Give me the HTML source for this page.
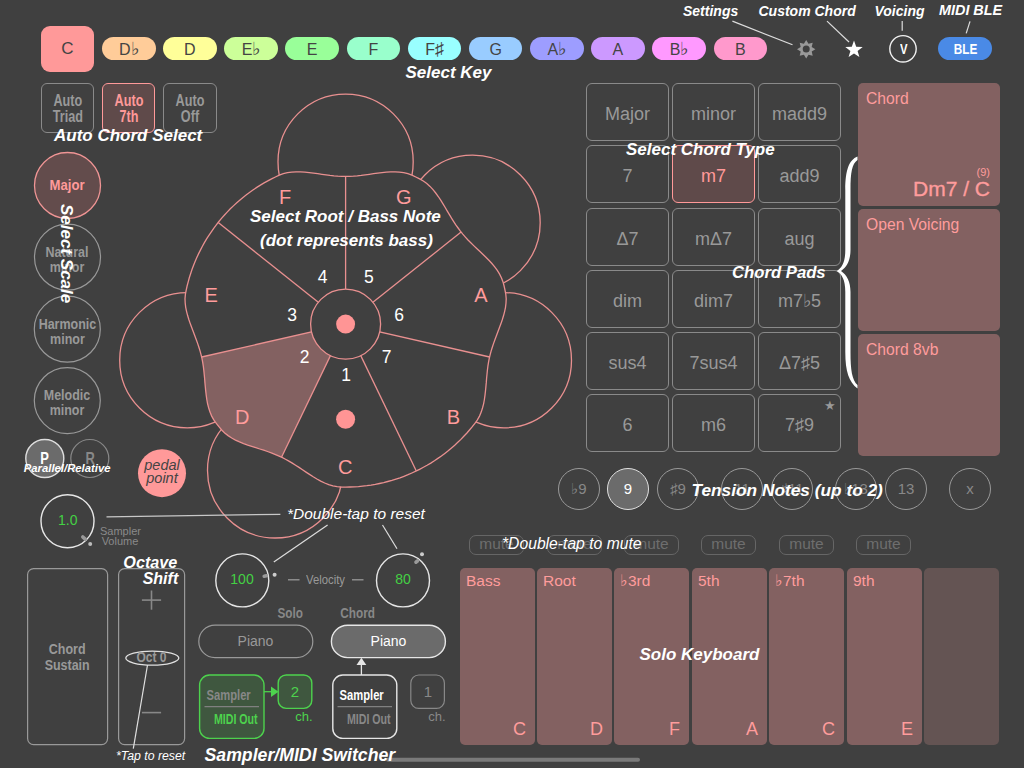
<!DOCTYPE html>
<html><head><meta charset="utf-8">
<style>
html,body{margin:0;padding:0;}
body{width:1024px;height:768px;background:#404040;position:relative;overflow:hidden;font-family:"Liberation Sans",sans-serif;}
.a{position:absolute;box-sizing:border-box;}
.key{position:absolute;top:37px;height:23.3px;width:53.5px;border-radius:12px;color:#444;font-size:16px;line-height:25px;text-align:center;}
.ann{position:absolute;color:#fff;font-family:"Liberation Sans",sans-serif;font-weight:bold;font-style:italic;white-space:nowrap;}
.cb{position:absolute;width:83px;height:58px;border:1.3px solid #8a8a8a;border-radius:6px;box-sizing:border-box;color:#999;font-size:18px;text-align:center;line-height:60px;}
.ct{text-align:center;}
.fl{font-size:1.12em;line-height:0;}
.cond{display:inline-block;transform:scaleX(0.82);font-weight:bold;}
.pad{position:absolute;left:858px;width:142px;background:#836161;border-radius:5px;color:#ff9c9c;font-size:15.7px;}
.pad span{position:absolute;left:8px;top:7px;}
.tn{position:absolute;top:468px;width:42px;height:42px;border-radius:50%;border:1.3px solid #999;box-sizing:border-box;color:#888;font-size:15px;text-align:center;line-height:40px;}
.mute{position:absolute;top:534.7px;width:55px;height:20px;border:1.3px solid #666;border-radius:7px;box-sizing:border-box;color:#6e6e6e;font-size:15.5px;text-align:center;line-height:16.5px;}
.sk{position:absolute;top:568px;height:177px;width:75px;background:#836161;border-radius:5px;color:#ff9c9c;font-size:15.5px;}
.sk .t{position:absolute;left:6px;top:4px;}
.sk .b{position:absolute;right:9px;bottom:5px;font-size:18px;}
</style></head>
<body>
<svg class="a" style="left:0;top:0" width="1024" height="768" viewBox="0 0 1024 768">
<defs><path id="wp" d="M345.6,176.4 L349.5,176.3 L353.4,176.1 L357.3,175.8 L361.2,175.4 L365.2,174.8 L369.3,174.3 L373.5,173.7 L377.7,173.1 L382.0,172.6 L386.3,172.1 L390.7,171.9 L395.1,171.9 L399.4,172.1 L403.7,172.7 L407.9,173.7 L411.9,175.2 L415.8,177.0 L419.6,178.9 L423.3,181.0 L426.8,183.5 L430.0,186.4 L433.0,189.6 L435.7,193.0 L438.3,196.5 L440.7,200.1 L443.0,203.8 L445.2,207.5 L447.3,211.1 L449.4,214.7 L451.5,218.2 L453.7,221.6 L455.8,224.9 L458.1,228.0 L460.4,231.1 L462.8,234.1 L465.4,237.1 L468.0,240.0 L470.8,242.8 L473.7,245.6 L476.7,248.4 L479.7,251.3 L482.8,254.2 L485.9,257.2 L488.9,260.3 L491.9,263.5 L494.7,266.9 L497.3,270.4 L499.6,274.1 L501.5,277.9 L503.0,281.9 L504.1,286.0 L505.0,290.2 L505.8,294.4 L506.2,298.7 L506.0,303.0 L505.5,307.3 L504.6,311.6 L503.5,315.8 L502.2,320.0 L500.8,324.1 L499.3,328.1 L497.8,332.1 L496.3,336.0 L494.9,339.8 L493.5,343.6 L492.3,347.3 L491.1,351.1 L490.1,354.8 L489.2,358.6 L488.5,362.4 L487.9,366.2 L487.4,370.2 L487.0,374.2 L486.6,378.2 L486.3,382.4 L485.9,386.6 L485.5,390.8 L485.0,395.1 L484.4,399.5 L483.6,403.8 L482.5,408.0 L481.2,412.1 L479.5,416.1 L477.4,419.9 L474.9,423.3 L472.3,426.7 L469.5,430.0 L466.7,433.2 L463.8,436.3 L460.9,439.4 L457.8,442.3 L454.7,445.2 L451.5,448.0 L448.2,450.8 L444.8,453.4 L441.4,456.0 L437.9,458.4 L434.4,460.8 L430.8,463.1 L427.1,465.3 L423.4,467.3 L419.6,469.3 L415.8,471.2 L411.9,473.0 L408.0,474.7 L404.0,476.3 L400.0,477.8 L396.0,479.1 L391.9,480.4 L387.8,481.5 L383.7,482.6 L379.5,483.5 L375.3,484.4 L371.1,485.1 L366.9,485.7 L362.6,486.2 L358.4,486.6 L354.1,486.9 L349.9,487.0 L345.6,487.1 L341.3,487.0 L337.1,486.7 L332.9,485.9 L328.7,484.6 L324.7,483.0 L320.7,481.1 L316.9,479.0 L313.2,476.8 L309.5,474.4 L306.0,472.1 L302.5,469.7 L299.0,467.4 L295.6,465.2 L292.3,463.1 L288.9,461.1 L285.5,459.2 L282.0,457.4 L278.5,455.8 L274.9,454.3 L271.3,452.8 L267.5,451.5 L263.7,450.2 L259.8,449.0 L255.8,447.7 L251.7,446.4 L247.7,445.1 L243.6,443.6 L239.5,441.9 L235.5,440.1 L231.7,438.0 L228.1,435.6 L224.7,433.0 L221.7,430.0 L218.9,426.7 L216.3,423.3 L213.8,419.9 L211.7,416.1 L210.0,412.1 L208.7,408.0 L207.6,403.8 L206.8,399.5 L206.2,395.1 L205.7,390.8 L205.3,386.6 L204.9,382.4 L204.6,378.2 L204.2,374.2 L203.8,370.2 L203.3,366.2 L202.7,362.4 L202.0,358.6 L201.1,354.8 L200.1,351.1 L198.9,347.3 L197.7,343.6 L196.3,339.8 L194.9,336.0 L193.4,332.1 L191.9,328.1 L190.4,324.1 L189.0,320.0 L187.7,315.8 L186.6,311.6 L185.7,307.3 L185.2,303.0 L185.0,298.7 L185.4,294.4 L186.2,290.2 L187.1,286.0 L188.2,281.9 L189.3,277.8 L190.6,273.7 L191.9,269.7 L193.4,265.7 L195.0,261.7 L196.7,257.8 L198.5,253.9 L200.4,250.1 L202.4,246.3 L204.4,242.6 L206.6,238.9 L208.9,235.3 L211.3,231.8 L213.7,228.3 L216.3,224.9 L218.9,221.5 L221.7,218.2 L224.5,215.0 L227.4,211.9 L230.3,208.8 L233.4,205.9 L236.5,203.0 L239.7,200.2 L243.0,197.4 L246.4,194.8 L249.8,192.2 L253.3,189.8 L256.8,187.4 L260.4,185.1 L264.1,182.9 L267.8,180.9 L271.6,178.9 L275.4,177.0 L279.3,175.2 L283.3,173.7 L287.5,172.7 L291.8,172.1 L296.1,171.9 L300.5,171.9 L304.9,172.1 L309.2,172.6 L313.5,173.1 L317.7,173.7 L321.9,174.3 L326.0,174.8 L330.0,175.4 L333.9,175.8 L337.8,176.1 L341.7,176.3Z"/><clipPath id="wc"><use href="#wp"/></clipPath></defs>
<circle cx="345.6" cy="161.7" r="67.6" fill="none" stroke="#e99090" stroke-width="1.3"/>
<circle cx="472.6" cy="222.8" r="67.6" fill="none" stroke="#e99090" stroke-width="1.3"/>
<circle cx="503.9" cy="360.2" r="67.6" fill="none" stroke="#e99090" stroke-width="1.3"/>
<circle cx="275.1" cy="470.4" r="67.6" fill="none" stroke="#e99090" stroke-width="1.3"/>
<circle cx="187.3" cy="360.2" r="67.6" fill="none" stroke="#e99090" stroke-width="1.3"/>
<use href="#wp" fill="#404040"/>
<polygon clip-path="url(#wc)" points="345.6,324.1 215.4,594.4 111.1,511.1 53.1,390.9" fill="#836161"/>
<use href="#wp" fill="none" stroke="#e99090" stroke-width="1.3"/>
<line x1="345.6" y1="324.1" x2="345.6" y2="176.4" stroke="#e99090" stroke-width="1.3"/>
<line x1="345.6" y1="324.1" x2="461.1" y2="232.0" stroke="#e99090" stroke-width="1.3"/>
<line x1="345.6" y1="324.1" x2="489.6" y2="357.0" stroke="#e99090" stroke-width="1.3"/>
<line x1="345.6" y1="324.1" x2="416.3" y2="471.0" stroke="#e99090" stroke-width="1.3"/>
<line x1="345.6" y1="324.1" x2="281.5" y2="457.2" stroke="#e99090" stroke-width="1.3"/>
<line x1="345.6" y1="324.1" x2="201.6" y2="357.0" stroke="#e99090" stroke-width="1.3"/>
<line x1="345.6" y1="324.1" x2="218.2" y2="222.5" stroke="#e99090" stroke-width="1.3"/>
<circle cx="345.6" cy="324.1" r="35" fill="#404040" stroke="#e99090" stroke-width="1.3"/>
<circle cx="345.6" cy="324.1" r="9.5" fill="#ff9595"/>
<circle cx="345.6" cy="419.2" r="9.5" fill="#ff9595"/>
<text x="285.0" y="204.4" fill="#ff9c9c" font-size="20" text-anchor="middle">F</text>
<text x="403.7" y="204.4" fill="#ff9c9c" font-size="20" text-anchor="middle">G</text>
<text x="211.2" y="301.7" fill="#ff9c9c" font-size="20" text-anchor="middle">E</text>
<text x="480.8" y="301.7" fill="#ff9c9c" font-size="20" text-anchor="middle">A</text>
<text x="242.3" y="424.3" fill="#ff9c9c" font-size="20" text-anchor="middle">D</text>
<text x="453.4" y="424.3" fill="#ff9c9c" font-size="20" text-anchor="middle">B</text>
<text x="345.2" y="473.5" fill="#ff9c9c" font-size="20" text-anchor="middle">C</text>
<text x="322.5" y="282.8" fill="#fff" font-size="17.5" text-anchor="middle">4</text>
<text x="368.8" y="282.8" fill="#fff" font-size="17.5" text-anchor="middle">5</text>
<text x="292.2" y="320.9" fill="#fff" font-size="17.5" text-anchor="middle">3</text>
<text x="399.1" y="320.9" fill="#fff" font-size="17.5" text-anchor="middle">6</text>
<text x="304.6" y="362.9" fill="#fff" font-size="17.5" text-anchor="middle">2</text>
<text x="386.7" y="362.9" fill="#fff" font-size="17.5" text-anchor="middle">7</text>
<text x="346.0" y="381.4" fill="#fff" font-size="17.5" text-anchor="middle">1</text>
</svg>
<!-- key row -->
<div class="a" style="left:41px;top:26px;width:53px;height:46px;background:#ff9999;border-radius:9px;color:#444;font-size:17px;line-height:46px;text-align:center;">C</div>
<div class="key" style="left:102.00px;background:#ffcc99">D<span class="fl">&#9837;</span></div>
<div class="key" style="left:163.15px;background:#ffff99">D</div>
<div class="key" style="left:224.30px;background:#ccff99">E<span class="fl">&#9837;</span></div>
<div class="key" style="left:285.45px;background:#99ff99">E</div>
<div class="key" style="left:346.60px;background:#99ffcc">F</div>
<div class="key" style="left:407.75px;background:#99ffff">F<span class="fl">&#9839;</span></div>
<div class="key" style="left:468.90px;background:#99ccff">G</div>
<div class="key" style="left:530.05px;background:#9d9dff">A<span class="fl">&#9837;</span></div>
<div class="key" style="left:591.20px;background:#cc99ff">A</div>
<div class="key" style="left:652.35px;background:#ff99ff">B<span class="fl">&#9837;</span></div>
<div class="key" style="left:713.50px;background:#ff99cc">B</div>

<!-- BLE -->
<div class="a" style="left:938px;top:37px;width:54px;height:23px;border-radius:12px;background:#4a8ae6;color:#fff;font-size:15.5px;line-height:24px;text-align:center;"><span class="cond" style="transform:scaleX(.76)">BLE</span></div>

<!-- Auto buttons -->
<div class="a" style="left:41px;top:83px;width:53px;height:50px;border:1.3px solid #8a8a8a;border-radius:6px;color:#999;font-size:15.8px;line-height:16.4px;text-align:center;padding-top:8.6px;"><span class="cond" style="transform:scaleX(.8)">Auto<br>Triad</span></div>
<div class="a" style="left:102px;top:83px;width:53px;height:50px;border:1.3px solid #ff9999;background:#5f4a4a;border-radius:6px;color:#ff9999;font-size:15.8px;line-height:16.4px;text-align:center;padding-top:8.6px;"><span class="cond" style="transform:scaleX(.8)">Auto<br>7th</span></div>
<div class="a" style="left:163px;top:83px;width:54px;height:50px;border:1.3px solid #8a8a8a;border-radius:6px;color:#999;font-size:15.8px;line-height:16.4px;text-align:center;padding-top:8.6px;"><span class="cond" style="transform:scaleX(.8)">Auto<br>Off</span></div>

<!-- chord type grid -->
<div class="cb" style="left:586px;top:83px">Major</div>
<div class="cb" style="left:672px;top:83px">minor</div>
<div class="cb" style="left:758px;top:83px">madd9</div>
<div class="cb" style="left:586px;top:145px">7</div>
<div class="cb" style="left:672px;top:145px;border-color:#ff9999;background:#5f4a4a;color:#ff9999">m7</div>
<div class="cb" style="left:758px;top:145px">add9</div>
<div class="cb" style="left:586px;top:208px">&Delta;7</div>
<div class="cb" style="left:672px;top:208px">m&Delta;7</div>
<div class="cb" style="left:758px;top:208px">aug</div>
<div class="cb" style="left:586px;top:270px">dim</div>
<div class="cb" style="left:672px;top:270px">dim7</div>
<div class="cb" style="left:758px;top:270px">m7&#9837;5</div>
<div class="cb" style="left:586px;top:332px">sus4</div>
<div class="cb" style="left:672px;top:332px">7sus4</div>
<div class="cb" style="left:758px;top:332px">&Delta;7&#9839;5</div>
<div class="cb" style="left:586px;top:394px">6</div>
<div class="cb" style="left:672px;top:394px">m6</div>
<div class="cb" style="left:758px;top:394px">7&#9839;9<span style="position:absolute;right:4px;top:-19px;font-size:13px;">&#9733;</span></div>

<!-- chord pads -->
<div class="pad" style="top:83px;height:123px"><span>Chord</span>
 <div class="a" style="right:10px;bottom:4.8px;font-size:21px;-webkit-text-stroke:0.35px #ff9c9c;">Dm7 / C</div>
 <div class="a" style="right:10px;top:83px;font-size:11px;">(9)</div>
</div>
<div class="pad" style="top:209px;height:122px"><span>Open Voicing</span></div>
<div class="pad" style="top:334px;height:122px"><span>Chord 8vb</span></div>

<!-- tension notes -->
<div class="tn" style="left:558px">&#9837;9</div>
<div class="tn" style="left:607px;background:#6b6b6b;border-color:#e0e0e0;color:#fff">9</div>
<div class="tn" style="left:657px">&#9839;9</div>
<div class="tn" style="left:721px">11</div>
<div class="tn" style="left:771px">&#9839;11</div>
<div class="tn" style="left:835px">&#9837;13</div>
<div class="tn" style="left:885px">13</div>
<div class="tn" style="left:949px">x</div>

<!-- mute -->
<div class="mute" style="left:469px">mute</div>
<div class="mute" style="left:547px">mute</div>
<div class="mute" style="left:624px">mute</div>
<div class="mute" style="left:701px">mute</div>
<div class="mute" style="left:779px">mute</div>
<div class="mute" style="left:856px">mute</div>

<!-- solo keys -->
<div class="sk" style="left:460px"><div class="t">Bass</div><div class="b">C</div></div>
<div class="sk" style="left:537px"><div class="t">Root</div><div class="b">D</div></div>
<div class="sk" style="left:614px"><div class="t">&#9837;3rd</div><div class="b">F</div></div>
<div class="sk" style="left:692px"><div class="t">5th</div><div class="b">A</div></div>
<div class="sk" style="left:769px"><div class="t">&#9837;7th</div><div class="b">C</div></div>
<div class="sk" style="left:847px"><div class="t">9th</div><div class="b">E</div></div>
<div class="sk" style="left:924px;background:#645453"></div>


<!-- scale circles -->
<svg class="a" style="left:0;top:0" width="1024" height="768" viewBox="0 0 1024 768">
<circle cx="67.5" cy="185.5" r="33" fill="#634c4c" stroke="#f09595" stroke-width="1.3"/>
<circle cx="67.5" cy="257.2" r="33" fill="none" stroke="#999" stroke-width="1.2"/>
<circle cx="67.3" cy="329.2" r="33" fill="none" stroke="#999" stroke-width="1.2"/>
<circle cx="67.3" cy="400.6" r="33" fill="none" stroke="#999" stroke-width="1.2"/>
<circle cx="44.8" cy="458.5" r="19" fill="#6b6b6b" stroke="#dedede" stroke-width="1.4"/>
<circle cx="89.8" cy="458.5" r="19" fill="none" stroke="#888" stroke-width="1.2"/>
<circle cx="162" cy="473.2" r="24" fill="#ff9999"/>
<circle cx="67.5" cy="521.2" r="26.5" fill="none" stroke="#e6e6e6" stroke-width="1.4"/>
<line x1="82.8" y1="537" x2="85.2" y2="539.2" stroke="#999" stroke-width="3.6" stroke-linecap="round"/>
<circle cx="90.2" cy="544" r="2" fill="#bbb"/>
<line x1="106.5" y1="516.9" x2="280.4" y2="514.3" stroke="#c8c8c8" stroke-width="1.3"/>
<!-- bottom-left boxes -->
<rect x="27.6" y="568.6" width="80" height="176" rx="6" fill="none" stroke="#999" stroke-width="1.2"/>
<rect x="118.6" y="568.6" width="66" height="176" rx="6" fill="none" stroke="#999" stroke-width="1.2"/>
<line x1="141.9" y1="600.1" x2="161.1" y2="600.1" stroke="#888" stroke-width="1.6"/>
<line x1="151.5" y1="590.5" x2="151.5" y2="609.7" stroke="#888" stroke-width="1.6"/>
<line x1="141.9" y1="712.6" x2="161.1" y2="712.6" stroke="#888" stroke-width="1.6"/>
<ellipse cx="152.3" cy="658.1" rx="26.5" ry="7" fill="none" stroke="#e0e0e0" stroke-width="1.3"/>
<line x1="147.5" y1="665" x2="133.3" y2="748.6" stroke="#e0e0e0" stroke-width="1.2"/>
<!-- velocity knobs -->
<circle cx="242.3" cy="580.4" r="26.5" fill="none" stroke="#e6e6e6" stroke-width="1.4"/>
<line x1="264.2" y1="576.2" x2="266.4" y2="575.8" stroke="#999" stroke-width="3.6" stroke-linecap="round"/>
<circle cx="274.6" cy="574.8" r="2" fill="#ccc"/>
<circle cx="403" cy="580.4" r="26.5" fill="none" stroke="#e6e6e6" stroke-width="1.4"/>
<line x1="416" y1="562.2" x2="417.6" y2="560.8" stroke="#999" stroke-width="3.6" stroke-linecap="round"/>
<circle cx="422" cy="554.3" r="2" fill="#ccc"/>
<line x1="273.8" y1="562" x2="327.6" y2="525" stroke="#ddd" stroke-width="1.2"/>
<line x1="382.5" y1="525" x2="397" y2="548.8" stroke="#ddd" stroke-width="1.2"/>
<line x1="288" y1="579.8" x2="299.5" y2="579.8" stroke="#999" stroke-width="1.3"/>
<line x1="352" y1="579.8" x2="363.5" y2="579.8" stroke="#999" stroke-width="1.3"/>
<!-- piano pills -->
<rect x="198.8" y="625.2" width="114" height="32.4" rx="16.2" fill="none" stroke="#999" stroke-width="1.2"/>
<rect x="331.4" y="625.2" width="114" height="32.4" rx="16.2" fill="#6b6b6b" stroke="#e6e6e6" stroke-width="1.4"/>
<!-- sampler boxes -->
<rect x="199.6" y="675" width="64.4" height="63.4" rx="10" fill="#3f573f" stroke="#4dd24d" stroke-width="1.4"/>
<line x1="204.5" y1="706.7" x2="259" y2="706.7" stroke="#808080" stroke-width="1.3"/>
<rect x="278.2" y="675" width="33.6" height="33.4" rx="8" fill="#3f573f" stroke="#4dd24d" stroke-width="1.4"/>
<line x1="264" y1="691.7" x2="272" y2="691.7" stroke="#4dd24d" stroke-width="1.3"/>
<polygon points="271,686.5 278.5,691.7 271,696.9" fill="#4dd24d"/>
<rect x="332.8" y="675" width="64" height="63.4" rx="10" fill="none" stroke="#e6e6e6" stroke-width="1.4"/>
<line x1="337.5" y1="706.7" x2="392" y2="706.7" stroke="#808080" stroke-width="1.3"/>
<rect x="410.8" y="675" width="33.6" height="33.4" rx="8" fill="none" stroke="#888" stroke-width="1.2"/>
<line x1="361.4" y1="663" x2="361.4" y2="675" stroke="#e6e6e6" stroke-width="1.3"/>
<polygon points="356.5,665 361.4,657.8 366.3,665" fill="#e6e6e6"/>
<!-- top right icons & lines -->
<line x1="732.4" y1="21.1" x2="792.5" y2="44.8" stroke="#ddd" stroke-width="1.2"/>
<line x1="827" y1="21.1" x2="849" y2="42" stroke="#ddd" stroke-width="1.2"/>
<line x1="902.2" y1="21" x2="902.2" y2="30.8" stroke="#ddd" stroke-width="1.2"/>
<line x1="970" y1="21.4" x2="966.2" y2="33.4" stroke="#ddd" stroke-width="1.2"/>
<circle cx="903" cy="48.8" r="13.2" fill="none" stroke="#f0f0f0" stroke-width="1.4"/>
<polygon fill="#fff" transform="translate(0,0.8)" points="854,39.8 856.2,45.9 862.7,46.1 857.6,50.1 859.4,56.3 854,52.7 848.6,56.3 850.4,50.1 845.3,46.1 851.8,45.9"/>
<g transform="translate(806.2,49.2)" fill="#999">
<polygon points="0,-9.2 2.3,-5.5 6.5,-6.5 5.5,-2.3 9.2,0 5.5,2.3 6.5,6.5 2.3,5.5 0,9.2 -2.3,5.5 -6.5,6.5 -5.5,2.3 -9.2,0 -5.5,-2.3 -6.5,-6.5 -2.3,-5.5"/>
</g>
<circle cx="806.2" cy="49" r="3.5" fill="#404040"/>
<!-- brace -->
<path d="M857.5,156.5 C849,160 845.3,170 845.3,190 L845.3,250 C845.3,262 842,268 836.5,271 C842,274 845.3,280 845.3,292 L845.3,352 C845.3,372 849,382 857.5,388.5 L857.5,385 C852,380 850.5,370 850.5,352 L850.5,292 C850.5,282 847,275 841,271 C847,267 850.5,260 850.5,250 L850.5,190 C850.5,172 852,164 857.5,160 Z" fill="#fff"/>
<!-- home bar -->
<rect x="386" y="757.8" width="254" height="4" rx="2" fill="#7a7a7a"/>
</svg>
<!-- left column text -->
<div class="a ct" style="left:17px;top:177px;width:100px;color:#ff9a9a;font-size:15px;line-height:16px;"><span class="cond" style="transform:scaleX(.875)">Major</span></div>
<div class="a ct" style="left:17px;top:245px;width:100px;color:#999;font-size:14.5px;line-height:14.5px;"><span class="cond" style="transform:scaleX(.86)">Natural<br>minor</span></div>
<div class="a ct" style="left:17px;top:317px;width:100px;color:#999;font-size:14.5px;line-height:14.5px;"><span class="cond" style="transform:scaleX(.86)">Harmonic<br>minor</span></div>
<div class="a ct" style="left:17px;top:388px;width:100px;color:#999;font-size:14.5px;line-height:14.5px;"><span class="cond" style="transform:scaleX(.86)">Melodic<br>minor</span></div>
<div class="a ct" style="left:20px;top:450px;width:50px;color:#fff;font-size:17px;line-height:17px;"><span class="cond" style="transform:scaleX(.76)">P</span></div>
<div class="a ct" style="left:65px;top:450px;width:50px;color:#888;font-size:17px;line-height:17px;"><span class="cond" style="transform:scaleX(.76)">R</span></div>
<div class="a ct" style="left:122px;top:459px;width:80px;color:#444;font-size:14.5px;line-height:12.5px;font-style:italic;">pedal<br>point</div>
<div class="a" style="left:17.8px;top:512.8px;width:100px;text-align:center;color:#44d044;font-size:14px;line-height:14px;">1.0</div>
<div class="a" style="left:100px;top:527px;color:#8a8a8a;font-size:11px;line-height:9.5px;text-align:center;width:40px;">Sampler<br>Volume</div>
<div class="a ct" style="left:27px;top:641px;width:81px;color:#999;font-size:14.5px;line-height:16px;"><span class="cond" style="transform:scaleX(.86)">Chord<br>Sustain</span></div>
<div class="a ct" style="left:118px;top:650px;width:67px;color:#999;font-size:14px;line-height:14px;"><span class="cond" style="transform:scaleX(.86)">Oct 0</span></div>
<div class="a ct" style="left:192px;top:572px;width:100px;color:#44d044;font-size:14px;line-height:14px;">100</div>
<div class="a ct" style="left:353px;top:572px;width:100px;color:#44d044;font-size:14px;line-height:14px;">80</div>
<div class="a" style="left:305.8px;top:573px;color:#999;font-size:13px;line-height:13px;"><span style="display:inline-block;transform:scaleX(.87);transform-origin:left">Velocity</span></div>
<div class="a ct" style="left:240px;top:606px;width:100px;color:#888;font-size:14px;line-height:14px;"><span class="cond" style="transform:scaleX(.84)">Solo</span></div>
<div class="a ct" style="left:308px;top:606px;width:100px;color:#888;font-size:14px;line-height:14px;"><span class="cond" style="transform:scaleX(.84)">Chord</span></div>
<div class="a ct" style="left:198px;top:634px;width:115px;color:#999;font-size:14px;line-height:14px;">Piano</div>
<div class="a ct" style="left:331px;top:634px;width:115px;color:#fff;font-size:14px;line-height:14px;">Piano</div>
<div class="a ct" style="left:196.5px;top:687.5px;width:65px;color:#888;font-size:14px;line-height:14px;"><span class="cond" style="transform:scaleX(.8)">Sampler</span></div>
<div class="a ct" style="left:203.5px;top:712px;width:65px;color:#4dd24d;font-size:14px;line-height:14px;"><span class="cond" style="transform:scaleX(.76)">MIDI Out</span></div>
<div class="a ct" style="left:278px;top:684px;width:34px;color:#4dd24d;font-size:15px;line-height:15px;">2</div>
<div class="a ct" style="left:287px;top:709.5px;width:34px;color:#4dd24d;font-size:13px;line-height:13px;">ch.</div>
<div class="a ct" style="left:329px;top:687.5px;width:65px;color:#fff;font-size:14px;line-height:14px;"><span class="cond" style="transform:scaleX(.8)">Sampler</span></div>
<div class="a ct" style="left:336.5px;top:712px;width:65px;color:#888;font-size:14px;line-height:14px;"><span class="cond" style="transform:scaleX(.76)">MIDI Out</span></div>
<div class="a ct" style="left:411px;top:684px;width:34px;color:#888;font-size:15px;line-height:15px;">1</div>
<div class="a ct" style="left:420px;top:709.5px;width:34px;color:#888;font-size:13px;line-height:13px;">ch.</div>

<div class="a ct" style="left:878.4px;top:42px;width:50px;color:#fff;font-size:14.5px;line-height:14.5px;"><span class="cond" style="transform:scaleX(.78)">V</span></div>
<!-- annotations -->
<div class="ann" style="left:683px;top:3.7px;font-size:14px;line-height:14px;">Settings</div>
<div class="ann" style="left:758.5px;top:3.7px;font-size:14px;line-height:14px;">Custom Chord</div>
<div class="ann" style="left:874.5px;top:3.7px;font-size:14px;line-height:14px;">Voicing</div>
<div class="ann" style="left:939px;top:3.3px;font-size:14.4px;line-height:14.4px;">MIDI BLE</div>
<div class="ann" style="left:405.5px;top:64.1px;font-size:17px;line-height:17px;">Select Key</div>
<div class="ann" style="left:54px;top:126.7px;font-size:17px;line-height:17px;">Auto Chord Select</div>
<div class="ann" style="left:626px;top:141.3px;font-size:17px;line-height:17px;">Select Chord Type</div>
<div class="ann" style="left:732px;top:264.5px;font-size:16.7px;line-height:16.7px;">Chord Pads</div>
<div class="ann" style="left:691.5px;top:482px;font-size:17.3px;line-height:17.3px;">Tension Notes (up to 2)</div>
<div class="ann" style="left:250px;top:207.7px;font-size:17px;line-height:17px;">Select Root / Bass Note</div>
<div class="ann" style="left:260px;top:231.5px;font-size:17px;line-height:17px;">(dot represents bass)</div>
<div class="ann" style="left:639.5px;top:646.1px;font-size:17px;line-height:17px;">Solo Keyboard</div>
<div class="ann" style="right:846.7px;top:553.9px;font-size:16.2px;line-height:16.2px;">Octave</div>
<div class="ann" style="right:845.8px;top:571.3px;font-size:16px;line-height:16px;">Shift</div>
<div class="ann" style="left:204.5px;top:746.7px;font-size:17.7px;line-height:17.7px;">Sampler/MIDI Switcher</div>
<div class="ann" style="left:23.8px;top:463.4px;font-size:11.3px;line-height:11.3px;">Parallel/Relative</div>
<div class="ann" style="left:287px;top:506px;font-size:15.5px;line-height:15.5px;font-weight:normal;">*Double-tap to reset</div>
<div class="ann" style="left:502px;top:535.7px;font-size:15.7px;line-height:15.7px;font-weight:normal;">*Double-tap to mute</div>
<div class="ann" style="left:116px;top:750px;font-size:12.3px;line-height:12.3px;font-weight:normal;">*Tap to reset</div>
<div class="ann" style="left:61px;top:204px;font-size:17px;line-height:17px;transform-origin:0 0;transform:translate(14px,0) rotate(90deg);">Select Scale</div>

</body></html>
